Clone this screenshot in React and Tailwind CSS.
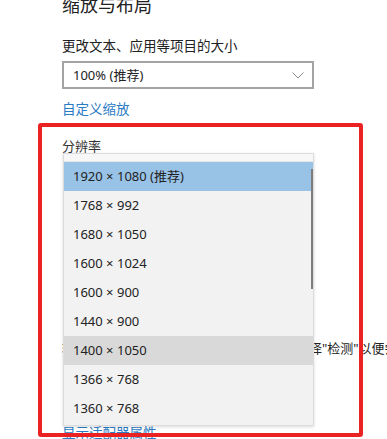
import React from 'react';

const resolutions = [
  '1920 × 1080 (推荐)',
  '1768 × 992',
  '1680 × 1050',
  '1600 × 1024',
  '1600 × 900',
  '1440 × 900',
  '1400 × 1050',
  '1366 × 768',
  '1360 × 768',
];

const font = { fontFamily: '"Noto Sans", "Noto Sans CJK SC", sans-serif' };

const App = () => {
  return (
    <div className="relative w-[387px] h-[439px] overflow-hidden bg-white text-[#1a1a1a]" style={font}>
      <div className="flex flex-col pl-[62px]">
        <div className="mt-[-6px] h-[22px] text-[18px] leading-[22px] text-[#222]">缩放与布局</div>
        <div className="mt-[21px] h-[18px] text-[13.5px] leading-[18px] text-[#222]">更改文本、应用等项目的大小</div>
        <div className="mt-[6px] w-[252px] h-[28px] border-2 border-[#a3a3a3] flex items-center justify-between pl-[9px] pr-[8px]">
          <span className="text-[13px] leading-none text-[#222]">100% (推荐)</span>
          <svg width="12" height="7" viewBox="0 0 12 7" fill="none">
            <path d="M0.5 0.5 L6 6 L11.5 0.5" stroke="#8a8a8a" strokeWidth="1" />
          </svg>
        </div>
        <div className="mt-[11px] h-[18px] text-[13.5px] leading-[18px] text-[#2b7bc4]">自定义缩放</div>
        <div className="mt-[19px] h-[18px] text-[13px] leading-[18px] text-[#333]">分辨率</div>
        <div className="mt-[184px] h-[18px] text-[13px] leading-[18px] text-[#222] whitespace-nowrap">
          较旧的显示器可能不会总是自动连接。请选择"检测"以便尝试连接到它们。
        </div>
        <div className="mt-[67px] h-[18px] text-[13.5px] leading-[18px] text-[#2b7bc4]">显示适配器属性</div>
      </div>

      {/* dropdown list popup */}
      <div className="absolute left-[63px] top-[153px] w-[251px] h-[273px] bg-[#f2f2f2] border border-[#dcdcdc] shadow-[0_1px_3px_rgba(0,0,0,0.15)] flex flex-col">
        <div className="h-[8px] bg-[#f7f7f7] border-b border-[#e6e6e6]" />
        {resolutions.map((r, i) => (
          <div
            key={r}
            className={
              'h-[29px] flex items-center pl-[9px] text-[13px] text-[#222] ' +
              (i === 0 ? 'bg-[#99c2e7]' : i === 6 ? 'bg-[#d9d9d9]' : '')
            }
          >
            {r}
          </div>
        ))}
        <div className="absolute left-[247px] top-[15px] w-[2px] h-[120px] bg-[#7d7d7d]" />
      </div>

      {/* red annotation box */}
      <div className="absolute left-[38px] top-[123px] w-[325px] h-[314px] border-4 border-[#ea2222] rounded-[3px]" />
    </div>
  );
};

export default App;
